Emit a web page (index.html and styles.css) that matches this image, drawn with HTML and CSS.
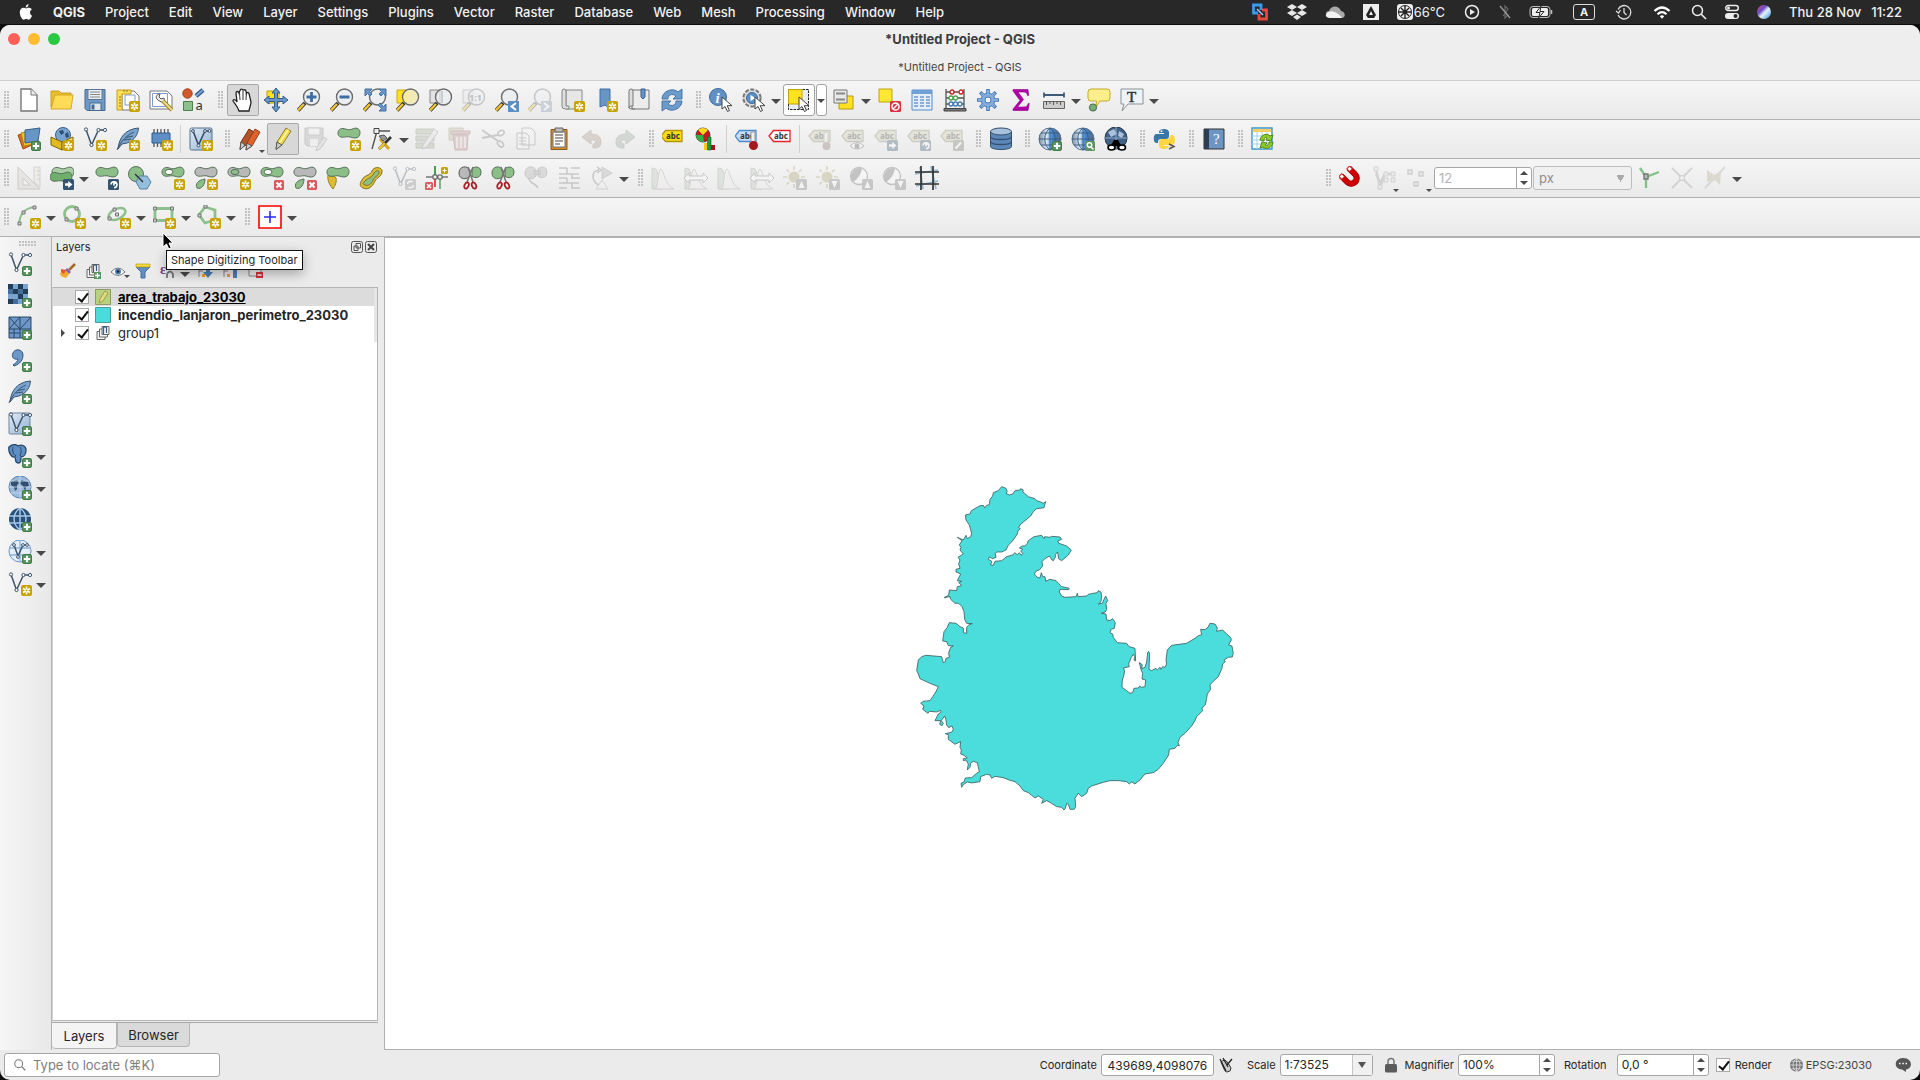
FILE: index.html
```html
<!DOCTYPE html>
<html lang="en">
<head>
<meta charset="utf-8">
<title>*Untitled Project - QGIS</title>
<link rel="stylesheet" href="styles.css">
</head>
<body>
<svg class="paints" aria-hidden="true">
<defs>
<linearGradient id="gBlue" x1="0" y1="0" x2="1" y2="1"><stop offset="0" stop-color="#e4edf7"/><stop offset="1" stop-color="#8fb0d3"/></linearGradient>
<linearGradient id="gGlobe"><stop offset="0" stop-color="#7d8fa3"/><stop offset=".35" stop-color="#dbe9f7"/><stop offset=".6" stop-color="#3f86d2"/><stop offset="1" stop-color="#5b6c80"/></linearGradient>
<linearGradient id="gSiri" x1="0" y1="0" x2="1" y2="1"><stop offset="0" stop-color="#e04a8b"/><stop offset=".35" stop-color="#6a4bc4"/><stop offset=".55" stop-color="#e8f4fb"/><stop offset="1" stop-color="#2b8ed6"/></linearGradient>
</defs>
</svg>
<svg class="sprite" aria-hidden="true">
<defs>
<g id="star"><rect x="13" y="13" width="11" height="11" rx="2" fill="#c8a200"/><path d="M18.500 14.500v8M15 16.500l7 4M22 16.500l-7 4" stroke="#fff" stroke-width="1.700"/><circle cx="18.500" cy="18.500" r="1" fill="#c8a200"/></g>
<g id="plus"><rect x="14.500" y="14.500" width="9" height="9" rx="1.500" fill="#5a9560" stroke="#41794a"/><path d="M19 15.800v6.400M15.800 19h6.400" stroke="#fff" stroke-width="2"/></g>
<g id="cross"><rect x="14" y="14" width="10" height="10" rx="1.500" fill="#d65b5f"/><path d="M16.500 16.500l5 5M21.500 16.500l-5 5" stroke="#fff" stroke-width="2"/></g>
<g id="go"><rect x="13" y="13" width="11" height="11" rx="1.500" fill="#33536f"/><path d="M15 17.300h3.200V15l4.300 3.500-4.300 3.500v-2.300H15z" fill="#fff"/></g>
<g id="spin"><rect x="13" y="13" width="11" height="11" rx="1.500" fill="#33536f"/><path d="M16 18.500a3 3 0 1 1 3 3.200M19 19.500v-2.200h2" fill="none" stroke="#fff" stroke-width="1.600"/></g>
<path id="blob" d="M1 6C1 2 5 .5 8.500 2c3 1.300 5 .8 8-.4C20 .3 23 2 23 5.500S21 11 18 11c-3.500 0-5-1.800-8.500-1.200C5 10.700 1 10.500 1 6z" stroke="#56705a"/>
<g id="lens"><path d="M8 15l-7 7.500" stroke="#333" stroke-width="4"/><path d="M7 16l-6 6.300" stroke="#f2c42c" stroke-width="2.400"/><circle cx="14.500" cy="9" r="8" fill="#e9eef2" fill-opacity=".7" stroke="#6c6c6c" stroke-width="1.400"/></g>
<path id="ptr" d="M11 9v12l3-2.500 2.500 5 2-1-2.300-4.800H21z" fill="#fff" stroke="#444"/>
<g id="veeShape"><path d="M3 2.500l5.500 15.500L15.500 3H22" fill="none" stroke="#3d556b" stroke-width="1.500"/><g fill="#fff" stroke="#3d556b"><circle cx="3" cy="2.500" r="1.600"/><circle cx="8.500" cy="18" r="1.600"/><circle cx="15.500" cy="3" r="1.600"/><circle cx="22" cy="3" r="1.600"/></g></g>
<g id="featherShape"><path d="M2 22C3 10 10 2 22.500 1 22 7 19 13 11 16l-5 1z" fill="#7ba4cf" stroke="#38536e"/><path d="M1 23C5 14 11 8 18 5M8 13l7-1M10 10.500l7-1.500" fill="none" stroke="#38536e"/></g>
<g id="tag"><path d="M1 7l4.500-5.500H22v11H5.500z" stroke-width="1.300"/><text x="6" y="10.300" class="tagtext">abc</text></g>
<g id="pencilShape"><path d="M6 15L15 1l5 3-9 14-6 4z" fill="#f0dc4c" stroke="#8c7b35"/><path d="M8 16.500L17.500 2.500" stroke="#fff39a" stroke-width="1.500"/><path d="M6 15l5 3-6 4.500z" fill="#ccc" stroke="#555"/></g>
<g id="globeShape"><circle cx="12" cy="12" r="11" fill="url(#gGlobe)" stroke="#55708c"/><path d="M1 12h22M3 6h18M3 18h18M12 1v22M12 1C5 6 5 18 12 23M12 1c7 5 7 17 0 22" fill="none" stroke="#38597c" stroke-width=".9"/></g>
<g id="scissorShape"><path d="M10 1l5 15M15 1L9 16" stroke="#777" stroke-width="1.600"/><g fill="none" stroke="#a81e26" stroke-width="1.800"><ellipse cx="8.500" cy="19.500" rx="2" ry="3.200" transform="rotate(25 8.500 19.500)"/><ellipse cx="16" cy="19.500" rx="2" ry="3.200" transform="rotate(-25 16 19.500)"/></g></g>
<g id="histShape"><path d="M1 23V2l4 1 4 9 3 11z" fill="#b8c8b4" stroke="#8c9c88"/><path d="M4 23c3 0 3-20 6-20 3 1 4 17 13 20z" fill="#f2eeee" stroke="#a99"/></g>
<path id="lr" d="M0 12l5-5v3h14V7l5 5-5 5v-3H5v3z" fill="#fff" stroke="#777"/>
<g id="sunShape"><circle cx="11" cy="11" r="5.500" fill="#a89f68"/><path d="M11 0v4M11 18v4M0 11h4M18 11h4M3.500 3.500l2.500 2.500M16 6l2.500-2.500M3.500 18.500L6 16" stroke="#a89f68" stroke-width="1.600"/></g>
<g id="conShape"><circle cx="10" cy="10" r="8.500" fill="#fff" stroke="#666" stroke-width="1.300"/><path d="M4 16A8.500 8.500 0 0 1 13 2.500C12 8 9 13 4 16z" fill="#666"/></g>
<g id="up"><rect x="13" y="13" width="11" height="11" rx="1.500" fill="#777"/><path d="M18.500 15l3 7h-6z" fill="#fff"/></g>
<g id="dn"><rect x="13" y="13" width="11" height="11" rx="1.500" fill="#777"/><path d="M18.500 22l3-7h-6z" fill="#fff"/></g>
<g id="groupShape" fill="#f3f3f3" stroke="#666"><path d="M2 6.500h8v8H2z"/><path d="M4.500 4h8v8h-8z"/><path d="M7 1.500h7v8H7z"/><path d="M8.500 9V2.500q1.500-1.500 3 0V8" fill="none" stroke="#35618c" stroke-width="1.200"/></g>
</defs>

<symbol id="new" viewBox="0 0 24 24"><path d="M4 1h10l6 6v16H4z" fill="#fff" stroke="#777" stroke-width="1.400"/><path d="M14 1v6h6" fill="#eee" stroke="#777"/></symbol>
<symbol id="open" viewBox="0 0 24 24"><path d="M1 3h8l2 2h10v3H6L1 19z" fill="#e9bf2c" stroke="#caa023"/><path d="M5 7h18l-2 14H1z" fill="#ffdc57" stroke="#d3a92b"/></symbol>
<symbol id="save" viewBox="0 0 24 24"><path d="M2 1.500h20v21H4l-2-2z" fill="#6c99c8" stroke="#47698e"/><path d="M5 1.500h14v10H5z" fill="#e9eff4" stroke="#5d7690"/><path d="M7 4h10M7 6.500h10M7 9h10" stroke="#888"/><path d="M7 15h11v7.500H7z" fill="#dfe6ec" stroke="#47698e"/><path d="M8.500 16.500h3v5h-3z" fill="#456a92"/></symbol>
<symbol id="newlayout" viewBox="0 0 24 24"><path d="M6 3h12l5 5v14H6z" fill="#fff" stroke="#777"/><path d="M9 7h10v10H9z" fill="#fff" stroke="#7b9ccd"/><path d="M1 2h14v4H6v16H1z" fill="#fbdf58" stroke="#c49e1a"/><path d="M3 9h2M3 12h2M3 15h2M3 18h2M8 2v2M11 2v2" stroke="#8d7112"/><use href="#star"/></symbol>
<symbol id="layouts" viewBox="0 0 24 24"><path d="M1 3h17l5 5v13H1z" fill="#fff" stroke="#777"/><path d="M3.500 5.500h15v13h-15z" fill="#fff" stroke="#7b9ccd"/><path d="M9 12c-3-2-2-6 2-6l-1 3 2 2 3-1c1 3-1 4-3 4z" fill="#eee" stroke="#555"/><path d="M14 13l9 9" stroke="#a2811d" stroke-width="4"/><path d="M14 13l9 9" stroke="#eddc8b" stroke-width="2"/></symbol>
<symbol id="style" viewBox="0 0 24 24"><circle cx="5.500" cy="5.500" r="4.700" fill="#d1592b" stroke="#9b3c18"/><path d="M21 2l-7 6" stroke="#345c8a" stroke-width="4.500"/><path d="M21 2l-7 6" stroke="#7aa3d0" stroke-width="2"/><path d="M1.500 13.500h9v9h-9z" fill="#8cc08c" stroke="#4f7d50"/><text x="13.500" y="22" class="smalla">a</text></symbol>
<symbol id="hand" viewBox="0 0 24 24"><path d="M8 23c-1-4-4-7-6-10 0-2 2-2 4 1L5 5c0-2 2.500-2 3 0l1-2.500c.5-2 3-2 3 .3 0-1.500 3-1.500 3 .7l.4 2c.6-1.500 2.800-1 2.800 1L20 14c0 4-2 6-2 9z" fill="#fff" stroke="#222" stroke-width="1.300"/><path d="M8.500 5l.5 7M12 3v9M15.300 5.500L15 12" stroke="#333"/></symbol>
<symbol id="pansel" viewBox="0 0 24 24"><path d="M3 3h12v12H3z" fill="#ffe21f" stroke="#b49a17"/><path d="M12 0l4 5h-2.500v5.500H19V8l5 4-5 4v-2.500h-5.500V19H16l-4 5-4-5h2.500v-5.500H5V16l-5-4 5-4v2.500h5.500V5H8z" fill="#6795c5" stroke="#355f8c"/></symbol>
<symbol id="zin" viewBox="0 0 24 24"><use href="#lens"/><path d="M14.500 4v10M9.500 9h10" stroke="#3d6ea5" stroke-width="2.800"/></symbol>
<symbol id="zout" viewBox="0 0 24 24"><use href="#lens"/><path d="M9.500 9h10" stroke="#3d6ea5" stroke-width="2.800"/></symbol>
<symbol id="zfull" viewBox="0 0 24 24"><use href="#lens"/><path d="M2 1h7L6.500 3.500 9 6 7 8 4.500 5.500 2 8zM23 1v7l-2.500-2.500L18 8l-2-2 2.500-2.500L16 1zM23 23h-7l2.500-2.500L15 17l2-2 3.500 3.500L23 16z" fill="#6795c5" stroke="#456f9c"/></symbol>
<symbol id="zsel" viewBox="0 0 24 24"><path d="M1 2h10v13H1z" fill="#ffe21f" stroke="#c9aa15"/><use href="#lens"/><circle cx="14.500" cy="9" r="7" fill="#f6eb9c" fill-opacity=".75"/></symbol>
<symbol id="zlay" viewBox="0 0 24 24"><path d="M1 2h10v13H1z" fill="#e3e3e3" stroke="#888"/><use href="#lens"/><path d="M13 3v12" stroke="#aaa"/></symbol>
<symbol id="znat" viewBox="0 0 24 24"><path d="M1 2h10v13H1z" fill="#e3e3e3" stroke="#888"/><use href="#lens"/><text x="7" y="12.500" class="one">1:1</text></symbol>
<symbol id="zlast" viewBox="0 0 24 24"><use href="#lens"/><rect x="13" y="13" width="11" height="11" fill="#5d8fc2"/><path d="M21 15l-4.500 3.500L21 22" fill="none" stroke="#fff" stroke-width="2"/></symbol>
<symbol id="znext" viewBox="0 0 24 24"><use href="#lens"/><rect x="13" y="13" width="11" height="11" fill="#7f96ad"/><path d="M16 15l4.500 3.500L16 22" fill="none" stroke="#fff" stroke-width="2"/></symbol>
<symbol id="mapview" viewBox="0 0 24 24"><path d="M5 2h16v19H5z" fill="#e7e7e7" stroke="#888"/><path d="M1 3q0-2 2-2t2 2v15h3v3H4q-3 0-3-3z" fill="#ddd" stroke="#888"/><use href="#star"/></symbol>
<symbol id="bmnew" viewBox="0 0 24 24"><path d="M6 1h10v20l-5-4-5 2z" fill="#6795c5" stroke="#456f9c"/><use href="#star"/></symbol>
<symbol id="bm" viewBox="0 0 24 24"><path d="M5 2h17v19H5z" fill="#ececec" stroke="#777"/><path d="M2 3q0-2 2-2t2 2v15H4q-2 0-2 2z" fill="#ddd" stroke="#777"/><path d="M2 19q0 2 2 2h4" fill="none" stroke="#777"/><path d="M14 1h4v8l-2 2-2-2z" fill="#6795c5" stroke="#355f8c"/></symbol>
<symbol id="refresh" viewBox="0 0 24 24"><path d="M2 11C2 3 13-1 18 4l4-3v10h-9l3-3c-4-3-8-1-8 3z" fill="#6c9acb" stroke="#4877a9"/><path d="M22 13c0 8-11 12-16 7l-4 3V13h9l-3 3c4 3 8 1 8-3z" fill="#6c9acb" stroke="#4877a9"/></symbol>
<symbol id="info" viewBox="0 0 24 24"><circle cx="9" cy="9" r="8.500" fill="#6190c4" stroke="#3c6ca1"/><text x="6.500" y="15" class="ital">i</text><use href="#ptr" x="2"/></symbol>
<symbol id="action" viewBox="0 0 24 24"><circle cx="10" cy="10" r="8.600" fill="#ddd" stroke="#777" stroke-width="2" stroke-dasharray="4 1.500"/><circle cx="10" cy="10" r="5.500" fill="#5d90c5" stroke="#3c6ca1"/><path d="M8.500 7l5 3-5 3z" fill="#fff"/><use href="#ptr" x="2"/></symbol>
<symbol id="select" viewBox="0 0 24 24"><path d="M1.500 1.500h20v20h-20z" fill="#e9edf1" stroke="#222" stroke-dasharray="2.500 1"/><path d="M1.500 1.500H15V16H1.500z" fill="#ffe21f" stroke="#c1a312"/><use href="#ptr" x="1"/></symbol>
<symbol id="selform" viewBox="0 0 24 24"><path d="M7 8h14v13H7z" fill="#ffe21f" stroke="#b49a17"/><path d="M2 2h13v13H2z" fill="#e8e8e8" stroke="#777"/><path d="M4 5.500h9M4 11.500h9" stroke="#888" stroke-width="2"/></symbol>
<symbol id="desel" viewBox="0 0 24 24"><path d="M2 1h13v13H2z" fill="#ffe732" stroke="#c1a312"/><rect x="13" y="13" width="11" height="11" rx="1.500" fill="#d8333a"/><circle cx="18.500" cy="18.500" r="3.600" fill="none" stroke="#fff" stroke-width="1.500"/><path d="M16 21l5-5" stroke="#fff" stroke-width="1.500"/></symbol>
<symbol id="table" viewBox="0 0 24 24"><path d="M2 2h20v20H2z" fill="#e4eefa" stroke="#568bc4"/><path d="M2 2h20v4H2z" fill="#6fa0d6"/><path d="M4 9h4M10 9h4M16 9h4M4 12h4M10 12h4M16 12h4M4 15h4M10 15h4M16 15h4M4 18h4M10 18h4M16 18h4" stroke="#6d9bd0" stroke-width="1.400"/></symbol>
<symbol id="abacus" viewBox="0 0 24 24"><path d="M3 1v20M21 1v20M3 4h18M3 10h18M3 16h18" stroke="#555" stroke-width="1.300"/><path d="M1 20.500h22v2.500H1z" fill="#777" stroke="#444"/><g fill="#fff" stroke-width="1.300"><g stroke="#cc2027"><circle cx="9" cy="4" r="2"/><circle cx="18" cy="4" r="2"/></g><g stroke="#4ca350"><circle cx="8" cy="10" r="2"/><circle cx="12.500" cy="10" r="2"/></g><g stroke="#407ab7"><circle cx="8" cy="16" r="2"/><circle cx="12.500" cy="16" r="2"/><circle cx="17" cy="16" r="2"/></g></g></symbol>
<symbol id="gear" viewBox="0 0 24 24"><path d="M12 1v22M1 12h22M4.200 4.200l15.600 15.600M19.800 4.200L4.200 19.800" stroke="#487bb4" stroke-width="3.600"/><circle cx="12" cy="12" r="7" fill="#82abd9" stroke="#487bb4"/><path d="M12 2v20M2 12h20M5 5l14 14M19 5L5 19" stroke="#82abd9" stroke-width="2"/><circle cx="12" cy="12" r="3" fill="#f0f3f6" stroke="#487bb4"/></symbol>
<symbol id="sigma" viewBox="0 0 24 24"><path d="M4 1.500h15l.7 6H18.500C18 5 17 4 14.500 4H9l5.500 7.500L8.500 19H15c2.500 0 3.500-1 4.200-3.500h1.100L19 22.500H4v-1.500l7-8.500L4 3z" fill="#b000a8" stroke="#8b0086" stroke-width=".6"/></symbol>
<symbol id="measure" viewBox="0 0 24 24"><path d="M2 7h20M2 4.500v5M22 4.500v5" stroke="#3d5b78" stroke-width="1.800"/><path d="M1.500 13.500h21v7h-21z" fill="#ccc" stroke="#666"/><path d="M4.500 13v4M8 13v3M11.500 13v4M15 13v3M18.500 13v4" stroke="#555"/></symbol>
<symbol id="tip" viewBox="0 0 24 24"><path d="M4 1h16q3 0 3 3v6q0 3-3 3h-7l-4 6 .500-6H4q-3 0-3-3V4q0-3 3-3z" fill="#fbee8b" stroke="#c7a92b"/><circle cx="6" cy="19.500" r="3.600" fill="#78ad73" stroke="#47694a"/></symbol>
<symbol id="textann" viewBox="0 0 24 24"><path d="M1 1h22v15H8l-6 7 2-7H1z" fill="#edf4f7" stroke="#8a9296"/><text x="7" y="14" class="bigt">T</text></symbol>

<symbol id="dsm" viewBox="0 0 24 24"><path d="M1 8l10-2 4 12-9 4z" fill="#d96d20" stroke="#a3490e"/><path d="M4 6l11-2 2 13-10 2z" fill="#f2c32f" stroke="#b1850d"/><path d="M8 3l15-2-2 13-13 2z" fill="#6795c5" stroke="#375f8c"/><use href="#plus"/></symbol>
<symbol id="gpkg" viewBox="0 0 24 24"><circle cx="13" cy="8" r="7.500" fill="#7ba3cf" stroke="#3c5f85"/><path d="M9 4l4-1 1 3-3 2zM15 7l3-2 1 5-3 1z" fill="#2e4f75"/><path d="M1 10l11 5v8L1 18z" fill="#e0ba1f" stroke="#7c6511"/><path d="M12 15l11-5v8l-11 5z" fill="#ffe24a" stroke="#7c6511"/><use href="#star"/></symbol>
<symbol id="vnew" viewBox="0 0 24 24"><use href="#veeShape"/><use href="#star"/></symbol>
<symbol id="feather" viewBox="0 0 24 24"><use href="#featherShape"/><use href="#star"/></symbol>
<symbol id="chip" viewBox="0 0 24 24"><path d="M5 2v18M8.500 2v18M12 2v18M15.500 2v18M19 2v18" stroke="#555" stroke-width="1.300"/><path d="M3 6h18v10H3z" fill="#5d8fc5" stroke="#2f5b8c"/><use href="#star"/></symbol>
<symbol id="vbox" viewBox="0 0 24 24"><rect x="1" y="1" width="22" height="22" rx="1.500" fill="url(#gBlue)" stroke="#53718f"/><path d="M4 4l5.500 14L16 4h4" fill="none" stroke="#334b63" stroke-width="1.600"/><g fill="#fff" stroke="#334b63"><circle cx="4" cy="4" r="1.400"/><circle cx="9.500" cy="18.500" r="1.400"/><circle cx="16" cy="4" r="1.400"/><circle cx="20.500" cy="4" r="1.400"/></g><use href="#star"/></symbol>
<symbol id="pencils" viewBox="0 0 24 24"><path d="M3 15L11 2l5 3-8 13-6 4z" fill="#b5522a" stroke="#733017"/><path d="M9 16l8-14 5 3-8 14-6 4z" fill="#e0622b" stroke="#92401b"/><path d="M3 15l4 3-5 5zM9 16l5 3-6 4z" fill="#ccc" stroke="#555"/></symbol>
<symbol id="pencil" viewBox="0 0 24 24"><use href="#pencilShape"/></symbol>
<symbol id="saveedit" viewBox="0 0 24 24"><path d="M1 1h18v18H3l-2-2z" fill="#aaa" stroke="#777"/><path d="M4 1h12v7H4z" fill="#eee" stroke="#888"/><path d="M6 12h8v7H6z" fill="#eee"/><path d="M13 20l7-10 3 2-7 10-4 2z" fill="#ccc" stroke="#888"/></symbol>
<symbol id="addpoly" viewBox="0 0 24 24"><use href="#blob" fill="#8cbf88"/><use href="#star"/></symbol>
<symbol id="vertex" viewBox="0 0 24 24"><path d="M2 22L7 4M8 4h12" stroke="#555" stroke-width="1.400"/><path d="M4 1.500h5v5H4z" fill="#eee" stroke="#444"/><path d="M10 12l9 10" stroke="#d6a51e" stroke-width="3"/><path d="M21 10L9 22" stroke="#333" stroke-width="2.600"/><path d="M9 22l6-6" stroke="#f4c733" stroke-width="2.400"/><path d="M9 9l5-1 3 3-4 3z" fill="#999" stroke="#555"/></symbol>
<symbol id="modattr" viewBox="0 0 24 24"><path d="M1 2h18v5H1zM1 9h18v5H1zM1 16h18v5H1z" fill="#a5b093" stroke="#7c8570"/><path d="M8 18L19 2l4 3-11 15-5 2z" fill="#ddd" stroke="#888"/></symbol>
<symbol id="trash" viewBox="0 0 24 24"><path d="M1 1h14v12H1z" fill="#b9bb94" stroke="#8b8b70"/><path d="M5 8h15l-1 15H7zM3 4h19v3H3z" fill="#c59090" stroke="#8b5a5a"/><path d="M9 10v11M13 10v11M17 10v11" stroke="#efefef" stroke-width="1.500"/></symbol>
<symbol id="cut" viewBox="0 0 24 24"><path d="M1 3l16 11M1 11l16-3" stroke="#777" stroke-width="1.800"/><ellipse cx="20" cy="6" rx="3.300" ry="2.300" transform="rotate(-30 20 6)" fill="none" stroke="#777" stroke-width="1.600"/><ellipse cx="19.500" cy="17" rx="3.500" ry="2.300" transform="rotate(45 19.500 17)" fill="none" stroke="#777" stroke-width="1.600"/></symbol>
<symbol id="copy" viewBox="0 0 24 24"><path d="M8 1h9l4 4v13H8zM3 6h9l3 3v13H3z" fill="#f6f6f6" stroke="#777"/><path d="M5 11h7M5 14h7M5 17h7" stroke="#777"/></symbol>
<symbol id="paste" viewBox="0 0 24 24"><path d="M4 2.500h16v20H4z" fill="#cf8d33" stroke="#8c5a18"/><path d="M6 5h12v15H6z" fill="#fff" stroke="#777"/><path d="M8 1h8v4H8z" fill="#bbb" stroke="#666"/><path d="M8 8h8M8 11h8M8 14h8M8 17h5" stroke="#444"/></symbol>
<symbol id="undo" viewBox="0 0 24 24"><path d="M2 10l9-7v4c7 0 10 3 10 8s-3 6-8 6v-4c4 0 4-5-2-4v4z" fill="#ab9382" stroke="#8f7a6b"/></symbol>
<symbol id="redo" viewBox="0 0 24 24"><path d="M22 10l-9-7v4c-7 0-10 3-10 8s3 6 8 6v-4c-4 0-4-5 2-4v4z" fill="#95a59b" stroke="#7c8c82"/></symbol>
<symbol id="abc" viewBox="0 0 24 24"><g fill="#f8dc1a" stroke="#b39310"><use href="#tag" x="-2" y="2"/></g></symbol>
<symbol id="diagram" viewBox="0 0 24 24"><circle cx="8" cy="8" r="7" fill="#c5171e" stroke="#222" stroke-width=".7"/><path d="M8 8L1 8a7 7 0 0 0 8 7z" fill="#2bb246"/><path d="M8 8L3 3a7 7 0 0 1 10 0z" fill="#f8dc1a"/><path d="M9 16h3.500v7H9z" fill="#f8c91a"/><path d="M12.500 10h3.500v13h-3.500z" fill="#1f9a3d" stroke="#0e6424" stroke-width=".6"/><path d="M16 18h4v5h-4z" fill="#a5161c"/></symbol>
<symbol id="abpin" viewBox="0 0 24 24"><g fill="#c5def7" stroke="#4b8bd0"><use href="#tag" x="-1" y="2"/></g><path d="M16 5h4v10h-4z" fill="#eee" stroke="#999"/><circle cx="18.500" cy="18.500" r="4.500" fill="#a3191e"/></symbol>
<symbol id="abcred" viewBox="0 0 24 24"><g fill="#fff" stroke="#e5232c" class="redtag"><use href="#tag" x="0" y="2"/></g></symbol>
<symbol id="abpin2" viewBox="0 0 24 24"><g fill="#c9c9a8" stroke="#88886c"><use href="#tag" y="2"/></g><path d="M16 5h4v12h-4z" fill="#eee" stroke="#888"/><circle cx="18.500" cy="19" r="4" fill="#8b6c6c"/></symbol>
<symbol id="abeye" viewBox="0 0 24 24"><g fill="#c9c9a8" stroke="#88886c"><use href="#tag" y="2"/></g><path d="M9 19q7-7 14 0-7 6-14 0z" fill="#fff" stroke="#555"/><circle cx="16" cy="19" r="2.500" fill="#555"/></symbol>
<symbol id="abgo" viewBox="0 0 24 24"><g fill="#c9c9a8" stroke="#88886c"><use href="#tag" y="2"/></g><use href="#go"/></symbol>
<symbol id="abrot" viewBox="0 0 24 24"><g fill="#c9c9a8" stroke="#88886c"><use href="#tag" y="2"/></g><use href="#spin"/></symbol>
<symbol id="abedit" viewBox="0 0 24 24"><g fill="#c9c9a8" stroke="#88886c"><use href="#tag" y="2"/></g><rect x="13" y="13" width="11" height="11" rx="1.500" fill="#77776a"/><path d="M15.500 21.500l5.500-6" stroke="#fff" stroke-width="2"/></symbol>
<symbol id="db" viewBox="0 0 24 24"><path d="M1.500 4.500v15c0 4 21 4 21 0v-15z" fill="#5c87b8" stroke="#34506f"/><ellipse cx="12" cy="4.500" rx="10.500" ry="3.500" fill="#a9c1db" stroke="#34506f"/><path d="M1.500 9.500c0 4 21 4 21 0M1.500 14.500c0 4 21 4 21 0" fill="none" stroke="#34506f" stroke-width="1.300"/></symbol>
<symbol id="globeadd" viewBox="0 0 24 24"><use href="#globeShape"/><use href="#plus"/></symbol>
<symbol id="globefind" viewBox="0 0 24 24"><use href="#globeShape"/><rect x="14" y="14" width="10" height="10" rx="1.500" fill="#5a9560"/><circle cx="18.500" cy="18" r="2.200" fill="none" stroke="#fff" stroke-width="1.500"/><path d="M20 20l2.500 2.500" stroke="#fff" stroke-width="1.500"/></symbol>
<symbol id="globebin" viewBox="0 0 24 24"><circle cx="12" cy="11" r="11" fill="#416186" stroke="#24384d"/><path d="M4 5l6-3 3 5-6 3zM15 4l5 3-2 4-4-2z" fill="#a9c3dd"/><path d="M1 11h22M12 0v22" stroke="#8fabc8"/><path d="M6 20l4-7h4l4 7v3h-4l-1-4h-2l-1 4H6z" fill="#000"/><ellipse cx="7.500" cy="20.500" rx="3.500" ry="2.500" fill="#fff" stroke="#000" stroke-width="1.600"/><ellipse cx="18" cy="20.500" rx="3.500" ry="2.500" fill="#fff" stroke="#000" stroke-width="1.600"/></symbol>
<symbol id="python" viewBox="0 0 24 24"><path d="M6 5c0-4 10-4 10 0v4q0 3-3 3H8q-3 0-3 3v1H3C0 16 0 7 3 7h8V6H6z" fill="#3a75a8"/><path d="M18 8h1c4 0 4 10 0 10h-8v1h5c0 4-10 4-10 0v-4q0-3 3-3h5q3 0 3-3z" fill="#ffd640"/><circle cx="8.500" cy="4.200" r="1" fill="#fff"/><path d="M16 17l5 2.500-5 2.500" fill="none" stroke="#555" stroke-width="1.500"/></symbol>
<symbol id="help" viewBox="0 0 24 24"><path d="M2 2h20v20H2z" fill="#6c95c4" stroke="#333"/><path d="M2 2h5v20H2z" fill="#2d3c50"/><text x="11" y="17" class="q">?</text></symbol>
<symbol id="sheet" viewBox="0 0 24 24"><path d="M1 1h20v21H1z" fill="#fff" stroke="#3f95c6" stroke-width="1.400"/><path d="M2 2h18v3H2z" fill="#f5cf63"/><path d="M1 9h20M1 13h20M1 17h20M6 5v17M11 5v17M16 5v17" stroke="#a5cfe8"/><path d="M9 13c1-6 8-7 10-4l3-1-2 6-5-1 1-2c-2-1-3 0-3 3zM22 15c0 6-8 8-10 5l-3 1 2-6 5 1-2 2c2 1 4 0 4-3z" fill="#8fca2c" stroke="#4e8a14"/></symbol>

<symbol id="tri" viewBox="0 0 24 24"><path d="M1 1v22h22zM6 12v7h7z" fill="#d5cfc9" stroke="#8a8580" fill-rule="evenodd"/><path d="M17 1h6v20L17 16z" fill="#e8e3d6" stroke="#999"/><path d="M20 5h3M20 9h3M20 13h3" stroke="#888"/></symbol>
<symbol id="move" viewBox="0 0 24 24"><use href="#blob" fill="#a9cda5" x="1"/><use href="#blob" fill="#6fae6c" x="-1" y="5"/><use href="#go"/></symbol>
<symbol id="rot" viewBox="0 0 24 24"><use href="#blob" fill="#8cbf88"/><use href="#spin"/></symbol>
<symbol id="scale" viewBox="0 0 24 24"><circle cx="8" cy="8" r="7.500" fill="#8cbf88" stroke="#56705a"/><path d="M11 10h8l4 6-4 7h-7l-4-7z" fill="#94bfdc" stroke="#5682a5"/><path d="M7 8l8 8" stroke="#333" stroke-width="1.400"/></symbol>
<symbol id="ring" viewBox="0 0 24 24"><use href="#blob" fill="#8cbf88"/><ellipse cx="8" cy="6" rx="4" ry="2.600" fill="#fff" stroke="#56705a"/><use href="#star"/></symbol>
<symbol id="part" viewBox="0 0 24 24"><use href="#blob" fill="#b9b9b9"/><path d="M3 22c-2-4 1-8 8-9 0 5-3 11-8 9z" fill="#8cbf88" stroke="#56705a"/><use href="#star"/></symbol>
<symbol id="fill" viewBox="0 0 24 24"><use href="#blob" fill="#b9b9b9"/><ellipse cx="8" cy="6" rx="4" ry="2.600" fill="#8cbf88" stroke="#56705a"/><use href="#star"/></symbol>
<symbol id="delring" viewBox="0 0 24 24"><use href="#blob" fill="#8cbf88"/><ellipse cx="8" cy="6" rx="4" ry="2.600" fill="#fff" stroke="#56705a"/><use href="#cross"/></symbol>
<symbol id="delpart" viewBox="0 0 24 24"><use href="#blob" fill="#b9b9b9"/><path d="M3 22c-2-4 1-8 8-9 0 5-3 11-8 9z" fill="#8cbf88" stroke="#56705a"/><use href="#cross"/></symbol>
<symbol id="reshape" viewBox="0 0 24 24"><path d="M2 9c3 3 5-1 8 3 1 4-1 8-3 11-3-3-6-9-5-14z" fill="#dfbb32" stroke="#94802a"/><use href="#blob" fill="#8cbf88"/></symbol>
<symbol id="offset" viewBox="0 0 24 24"><path d="M3 14c2-5 8-4 10-9s10-4 10 0c0 6-5 6-7 10-3 7-8 9-12 7-4-2-3-5-1-8z" fill="#e0bc33" stroke="#7d6c20"/><path d="M6 15c3-3 7-3 9-8 2-3 5-3 5-1 0 4-4 4-6 8-2 5-5 6-8 5-3-1-2-2 0-4z" fill="#8cbf88" stroke="#75722c"/></symbol>
<symbol id="trimv" viewBox="0 0 24 24"><use href="#veeShape"/><rect x="13" y="13" width="11" height="11" rx="1.500" fill="#888"/><path d="M15.500 18a3 3 0 0 1 5-2M21.500 19a3 3 0 0 1-5 2" fill="none" stroke="#fff" stroke-width="1.600"/></symbol>
<symbol id="merge" viewBox="0 0 24 24"><path d="M10 0v11" stroke="#4d9a52" stroke-width="2"/><path d="M15 11v12" stroke="#7db67f" stroke-width="2"/><path d="M1 11h22" stroke="#777" stroke-width="1.600"/><path d="M10 13v8" stroke="#e05050" stroke-width="2"/><path d="M8 9h4v4H8zM13 9h4v4h-4z" fill="#eee" stroke="#555"/><rect x="16" y="1" width="7" height="7" rx="1.500" fill="#c8a200"/><path d="M19.500 2.500v4M17.500 4.500h4" stroke="#fff"/><rect x="0" y="16" width="8" height="8" rx="1.500" fill="#d65b5f"/><path d="M2 18l4 4M6 18l-4 4" stroke="#fff" stroke-width="1.500"/></symbol>
<symbol id="split1" viewBox="0 0 24 24"><path d="M12 10c-3 4-11 4-11-3S9-1 12 4z" fill="#b9b9b9" stroke="#555"/><path d="M14 10c3 3 9 2 9-4S16 0 14 3z" fill="#8cbf88" stroke="#56705a"/><use href="#scissorShape"/></symbol>
<symbol id="split2" viewBox="0 0 24 24"><path d="M12 10c-3 4-11 4-11-3S9-1 12 4z" fill="#8cbf88" stroke="#56705a"/><path d="M14 10c3 3 9 2 9-4S16 0 14 3z" fill="#8cbf88" stroke="#56705a"/><use href="#scissorShape"/></symbol>
<symbol id="stitch" viewBox="0 0 24 24"><path d="M12 10c-3 4-11 4-11-3S9-1 12 4z" fill="#aaa" stroke="#777"/><path d="M14 10c3 3 9 2 9-4S16 0 14 3z" fill="#aaa" stroke="#777"/><path d="M9 5h8M9 8h8M5 12c0 6 6 4 9 10" fill="none" stroke="#777" stroke-width="1.500"/></symbol>
<symbol id="lines" viewBox="0 0 24 24"><path d="M2 2h8M14 2h9M2 8h20M2 12h8M14 12h9M2 17h20M2 22h8M14 22h9M10 2v6M15 8v5M10 12v5M15 17v5" stroke="#777" stroke-width="1.500"/></symbol>
<symbol id="rotsym" viewBox="0 0 24 24"><path d="M9 19C1 15 1 5 9 4M7 1l4 3-4 3" fill="none" stroke="#777" stroke-width="1.500"/><path d="M12 1l10 6-10 6z" fill="#aaa" stroke="#888"/><path d="M12 14l6 9H6z" fill="#eee" stroke="#999"/></symbol>
<symbol id="hist" viewBox="0 0 24 24"><use href="#histShape"/></symbol>
<symbol id="histlr" viewBox="0 0 24 24"><use href="#histShape"/><use href="#lr"/></symbol>
<symbol id="sunup" viewBox="0 0 24 24"><use href="#sunShape"/><use href="#up"/></symbol>
<symbol id="sundn" viewBox="0 0 24 24"><use href="#sunShape"/><use href="#dn"/></symbol>
<symbol id="conup" viewBox="0 0 24 24"><use href="#conShape"/><use href="#up"/></symbol>
<symbol id="condn" viewBox="0 0 24 24"><use href="#conShape"/><use href="#dn"/></symbol>
<symbol id="hash" viewBox="0 0 24 24"><path d="M5 1l3 22M16 0l5 23M0 8l23-4M1 20l22-5" stroke="#8db4cf" stroke-width="1.600"/><path d="M6 0v24M18 0v24M0 6h24M0 18h24" stroke="#333" stroke-width="1.700"/></symbol>
<symbol id="magnet" viewBox="0 0 24 24"><g transform="rotate(-45 12 12)"><path d="M4 4v8c0 11 16 11 16 0V4h-5v8c0 4-6 4-6 0V4z" fill="#d40000" stroke="#a00000"/><path d="M4.500 2.500h4v4h-4zM15.500 2.500h4v4h-4z" fill="#fff" stroke="#c22"/></g></symbol>
<symbol id="snapall" viewBox="0 0 24 24"><path d="M4 3l4 18 4-9M4 8l4 9 5-9h8" fill="none" stroke="#999" stroke-width="2.500"/><path d="M2 1h4v4H2zM12 6h4v4h-4zM19 6h4v4h-4zM12 12h4v4h-4zM19 12h4v4h-4zM6 19h4v4H6z" fill="#ddd" stroke="#999"/></symbol>
<symbol id="dots" viewBox="0 0 24 24"><path d="M3 4h4v4H3zM14 6h4v4h-4zM9 16h4v4H9z" fill="#ddd" stroke="#888" stroke-width="1.400"/></symbol>
<symbol id="topo" viewBox="0 0 24 24"><path d="M3 2l6 9 13-5M9 11v11" fill="none" stroke="#84c08a" stroke-width="2.400"/><path d="M7 8h4v5H7z" fill="#bbb" stroke="#777" stroke-width="1.400"/></symbol>
<symbol id="inter" viewBox="0 0 24 24"><path d="M2 2l20 20M22 2L2 22" stroke="#999" stroke-width="2"/><circle cx="12" cy="12" r="2.500" fill="#eee" stroke="#888"/></symbol>
<symbol id="trace" viewBox="0 0 24 24"><path d="M2 22L22 1" stroke="#aaa" stroke-width="2"/><path d="M4 4l7 5 7-4-1 14-5-5-8 2z" fill="#b4ab88"/></symbol>

<symbol id="arc" viewBox="0 0 24 24"><path d="M2 19C3 8 8 3 18 2" fill="none" stroke="#8cc08c" stroke-width="2"/><path d="M1 17h3v3H1zM5 6h3v3H5zM16 1h3v3h-3z" fill="#ccc" stroke="#777"/><use href="#star"/></symbol>
<symbol id="circ" viewBox="0 0 24 24"><circle cx="10" cy="9" r="7.500" fill="none" stroke="#8cc08c" stroke-width="2.800"/><path d="M13 2h3v3h-3zM3 13h3v3H3z" fill="#ccc" stroke="#777"/><use href="#star"/></symbol>
<symbol id="elli" viewBox="0 0 24 24"><ellipse cx="10" cy="9" rx="9" ry="5" transform="rotate(-25 10 9)" fill="none" stroke="#8cc08c" stroke-width="2.500"/><path d="M8.500 8h3v3h-3zM6 3h3v3H6zM1 12h3v3H1z" fill="#ccc" stroke="#777"/><use href="#star"/></symbol>
<symbol id="rect" viewBox="0 0 24 24"><path d="M3 3.500h17v12H3z" fill="none" stroke="#8cc08c" stroke-width="2.800"/><path d="M1.500 2h3v3h-3zM18.500 2h3v3h-3zM1.500 14h3v3h-3z" fill="#ccc" stroke="#777"/><use href="#star"/></symbol>
<symbol id="penta" viewBox="0 0 24 24"><path d="M8 2l10 3v10l-10 3-6-8z" fill="none" stroke="#8cc08c" stroke-width="2.800"/><path d="M7 0h3v3H7zM1 9h3v3H1z" fill="#ccc" stroke="#777"/><use href="#star"/></symbol>
<symbol id="cad" viewBox="0 0 24 24"><path d="M1 1h22v22H1z" fill="#fff" stroke="#f00" stroke-width="1.600"/><path d="M12 6v12M6 12h12" stroke="#2a2af0" stroke-width="1.600"/></symbol>

<symbol id="vadd" viewBox="0 0 24 24"><use href="#veeShape"/><use href="#plus"/></symbol>
<symbol id="raster" viewBox="0 0 24 24"><path d="M0 0h20v20H0z" fill="#7ba3cf"/><path d="M0 0h5v5H0zM10 0h5v5h-5zM5 5h5v5H5zM15 5h5v5h-5zM0 15h5v5H0zM10 10h5v5h-5z" fill="#233c58"/><path d="M0 5h5v5H0zM10 5h5v5h-5zM5 15h5v5H5z" fill="#456d99"/><use href="#plus"/></symbol>
<symbol id="meshi" viewBox="0 0 24 24"><path d="M1 1h22v21H1z" fill="#6c97c7" stroke="#2b4865"/><path d="M1 13h22M12 1v21M1 1l11 12M12 1L1 13M23 1L12 13M6 13v9M1 17h11" stroke="#2b4865"/><use href="#plus"/></symbol>
<symbol id="comma" viewBox="0 0 24 24"><path d="M5 5c2-5 10-4 10 2 0 5-3 9-9 11l-1-1c3-2 5-4 5-6-4 1-7-2-5-6z" fill="#6c97c7" stroke="#35587e"/><use href="#plus"/></symbol>
<symbol id="fadd" viewBox="0 0 24 24"><use href="#featherShape"/><use href="#plus"/></symbol>
<symbol id="vboxadd" viewBox="0 0 24 24"><rect x="1" y="1" width="21" height="21" rx="1" fill="url(#gBlue)" stroke="#71869b"/><use href="#veeShape"/><use href="#plus"/></symbol>
<symbol id="elephant" viewBox="0 0 24 24"><path d="M1 3c3-3 7-3 9-1 4-2 8 0 8 4s-2 7-5 7c0 4 0 6-3 6s-2-3-3-6c-4 1-7-6-6-10z" fill="#5f8fc2" stroke="#27476a" stroke-width="1.300"/><path d="M5 3c-1 4 0 7 3 9M12 3c2 3 1 6 0 9" fill="none" stroke="#27476a"/><use href="#plus"/></symbol>
<symbol id="wms" viewBox="0 0 24 24"><circle cx="12" cy="11" r="11" fill="#9ab9da" stroke="#5b86b2"/><path d="M3 6l6-2 2 3-2 2v4l-2 2-1-4-3-2zM13 4l7 2 1 4-3 1-1 4-2-5-3-2z" fill="#324f70"/><path d="M1 11h22M12 0v22M3 5h18M3 17h18" stroke="#c9d9ea" stroke-width=".8"/><use href="#plus"/></symbol>
<symbol id="wcs" viewBox="0 0 24 24"><circle cx="12" cy="11" r="11" fill="#29507a"/><path d="M1 8h22M1 15h22M12 0v22M12 0C4 6 4 16 12 22M12 0c8 6 8 16 0 22" fill="none" stroke="#a5c6e8" stroke-width="1.500"/><use href="#plus"/></symbol>
<symbol id="wfs" viewBox="0 0 24 24"><circle cx="12" cy="11" r="11" fill="#e6eff9" stroke="#6c97c7"/><path d="M1 8h22M1 15h22M12 0v22" fill="none" stroke="#8bb1da" stroke-width="1.300"/><path d="M6 5l4 11 5-11h4" fill="none" stroke="#3d556b" stroke-width="1.500"/><g fill="#fff" stroke="#3d556b"><circle cx="6" cy="5" r="1.400"/><circle cx="10" cy="17" r="1.400"/><circle cx="15" cy="5" r="1.400"/><circle cx="19" cy="5" r="1.400"/></g><use href="#plus"/></symbol>

<symbol id="brush" viewBox="0 0 16 16"><path d="M15 1L9 7" stroke="#a56a24" stroke-width="2.500"/><path d="M7 5l4 4-2 2-4-4z" fill="#8a5fae"/><path d="M5 7l4 4-3 4-5-2-1-3z" fill="#f1a92c"/><path d="M1 6l5 1-2 4-3-2z" fill="#e8562c"/></symbol>
<symbol id="gadd" viewBox="0 0 16 16"><use href="#groupShape"/><path d="M9 9h7v7H9z" fill="#5a9560"/><path d="M12.500 10v5M10 12.500h5" stroke="#fff" stroke-width="1.300"/></symbol>
<symbol id="group" viewBox="0 0 16 16"><use href="#groupShape"/></symbol>
<symbol id="eye" viewBox="0 0 16 16"><path d="M1 9q7-8 14 0-7 7-14 0z" fill="#fff" stroke="#777"/><circle cx="8" cy="8.500" r="3" fill="#4b7db5"/><circle cx="8" cy="8.500" r="1.200" fill="#222"/></symbol>
<symbol id="funnel" viewBox="0 0 16 16"><path d="M1 4h14L10 9v6H6V9z" fill="#5f90c4" stroke="#466f9d"/><path d="M1 1h14v3H1z" fill="#f8dc3a" stroke="#b79b1c" stroke-width=".7"/></symbol>
<symbol id="expr" viewBox="0 0 16 16"><text x="0" y="11" class="eps">ε</text><path d="M7 14v-3q3-5 6 0v3M7 12v3M13 12v3" fill="none" stroke="#777" stroke-width="1.800"/></symbol>
<symbol id="expand" viewBox="0 0 16 16"><path d="M2 2v12M2 8h4" stroke="#888"/><path d="M5 4h3v3H5zM5 11h3v3H5z" fill="#ee9a2f"/><path d="M9 3h4v6h3l-5 6-5-6h3z" fill="#4f7fb8"/></symbol>
<symbol id="collapse" viewBox="0 0 16 16"><path d="M2 2v12M2 8h4" stroke="#888"/><path d="M5 4h3v3H5zM5 11h3v3H5z" fill="#ee9a2f"/><path d="M11 2h4v13h-4z" fill="#4f7fb8"/></symbol>
<symbol id="remove" viewBox="0 0 16 16"><path d="M2 1h12v12H2z" fill="#f1f1f1" stroke="#888"/><path d="M9 9h7v6H9z" fill="#d8343c"/><path d="M10.500 12h4" stroke="#fff" stroke-width="1.500"/></symbol>
</svg>

<nav class="menubar">
  <svg class="apple" viewBox="0 0 14 16"><path d="M9.500 0C9.700 1.800 8.300 3.500 6.800 3.500 6.500 1.800 8 .2 9.500 0zM11 8.300c0-1.700 1.200-2.500 1.800-2.900C11.900 4.100 10.500 3.800 9.500 3.800c-1 0-1.700.6-2.400.6-.8 0-1.500-.6-2.600-.6C2.500 3.900.8 5.500.8 8.600c0 3.300 2.200 7.100 4 7.100.8 0 1.300-.6 2.400-.6s1.400.6 2.400.6c1.500 0 2.800-2.300 3.400-4C12 11.200 11 10.200 11 8.300z" fill="#fff"/></svg>
  <button class="m app">QGIS</button><button class="m">Project</button><button class="m">Edit</button><button class="m">View</button><button class="m">Layer</button><button class="m">Settings</button><button class="m">Plugins</button><button class="m">Vector</button><button class="m">Raster</button><button class="m">Database</button><button class="m">Web</button><button class="m">Mesh</button><button class="m">Processing</button><button class="m">Window</button><button class="m">Help</button>
  <div class="tray">
    <svg width="18" height="18" viewBox="0 0 18 18"><path d="M7 10H2.500V2H10v5" fill="none" stroke="#3b9be8" stroke-width="2.800"/><path d="M11 7h4.500v9H8v-5" fill="none" stroke="#e8463f" stroke-width="2.800"/><path d="M6 6l6 6" stroke="#9cf" stroke-width="1.500"/></svg>
    <svg width="20" height="18" viewBox="0 0 20 18"><path d="M5 1l5 3-5 3-5-3zM15 1l5 3-5 3-5-3zM5 7l5 3-5 3-5-3zM15 7l5 3-5 3-5-3zM10 11.500l4 2.500-4 3-4-3z" fill="#e8e8e8"/></svg>
    <svg width="20" height="14" viewBox="0 0 20 14"><path d="M4 12C0 11 0 6 4 6c2-6 10-6 12 0 5 1 5 7 0 7H5z" fill="#a9a9a9"/><path d="M2 8q6-5 15 4.500l-1 .500H4Q-1 12 2 8z" fill="#f2f2f2"/></svg>
    <svg width="16" height="18" viewBox="0 0 16 18"><path d="M0 1h16v16H0z" fill="#eee"/><path d="M8 3l5 9-2 3H5l-2-3z" fill="#222"/><path d="M8 8l2 4H6z" fill="#eee"/></svg>
    <span class="temp"><svg width="16" height="18" viewBox="0 0 16 18"><rect y="1" width="16" height="16" rx="3" fill="#eee"/><circle cx="8" cy="9" r="6.500" fill="none" stroke="#222"/><path d="M8 3v12M2 9h12M4 5l8 8M12 5l-8 8" stroke="#222" stroke-width="1.400"/></svg>66°C</span>
    <svg width="18" height="18" viewBox="0 0 18 18"><circle cx="9" cy="9" r="6.500" fill="none" stroke="#eee" stroke-width="1.500"/><path d="M7 6l5 3-5 3z" fill="#eee"/></svg>
    <svg width="12" height="18" viewBox="0 0 12 18"><path d="M4 13l5-7-3-3v12l3-3-2-2" fill="none" stroke="#666" stroke-width="1.200"/><path d="M1 3l10 12" stroke="#999" stroke-width="1.300"/></svg>
    <svg width="24" height="14" viewBox="0 0 24 14"><rect x="1" y="1.500" width="20" height="11" rx="3" fill="none" stroke="#bbb"/><rect x="3" y="3" width="16" height="8" rx="1.500" fill="#eee"/><path d="M12 1L7 7.500h4L9.500 13 15 6.500h-4z" fill="#eee" stroke="#282828"/><path d="M22.500 5v4" stroke="#bbb" stroke-width="1.500"/></svg>
    <span class="kbd"><b>A</b></span>
    <svg width="18" height="18" viewBox="0 0 18 18"><path d="M3 6.500A6.700 6.700 0 1 1 3 12M1 8l2.500 2L5.500 7M9 5v4.500l2.500 2.500" fill="none" stroke="#ddd" stroke-width="1.300"/></svg>
    <svg width="22" height="16" viewBox="0 0 22 16"><path d="M3.500 7Q11 0 18.500 7M6.500 10.200q4.500-4 9 0" fill="none" stroke="#fff" stroke-width="2.200"/><path d="M8.800 12.300q2.200-2 4.400 0L11 14.800z" fill="#fff"/></svg>
    <svg width="16" height="16" viewBox="0 0 16 16"><circle cx="6.500" cy="6.500" r="5" fill="none" stroke="#eee" stroke-width="1.500"/><path d="M10 10l5 5" stroke="#eee" stroke-width="1.600"/></svg>
    <svg width="14" height="16" viewBox="0 0 14 16"><rect x=".7" y="1.500" width="12.600" height="5" rx="2.500" fill="none" stroke="#eee" stroke-width="1.400"/><rect y="9" width="14" height="6" rx="3" fill="#eee"/><circle cx="3.500" cy="4" r="1.500" fill="#eee"/><circle cx="10.500" cy="12" r="2" fill="#282828"/></svg>
    <svg width="14" height="14" viewBox="0 0 14 14"><circle cx="7" cy="7" r="7" fill="url(#gSiri)"/></svg>
    <time><span>Thu 28 Nov</span><span>11:22</span></time>
  </div>
</nav>

<div class="window">
  <header class="titlebar">
    <div class="lights"><i class="red"></i><i class="amber"></i><i class="green"></i></div>
    <h1>*Untitled Project - QGIS</h1>
    <p>*Untitled Project - QGIS</p>
  </header>

  <div class="bar">
    <div class="grp"><i class="grip"></i>
      <button class="tb"><svg><use href="#new"/></svg></button><button class="tb"><svg><use href="#open"/></svg></button><button class="tb"><svg><use href="#save"/></svg></button><button class="tb"><svg><use href="#newlayout"/></svg></button><button class="tb"><svg><use href="#layouts"/></svg></button><button class="tb"><svg><use href="#style"/></svg></button></div>
    <div class="grp"><i class="grip"></i>
      <button class="tb on"><svg><use href="#hand"/></svg></button><button class="tb"><svg><use href="#pansel"/></svg></button><button class="tb"><svg><use href="#zin"/></svg></button><button class="tb"><svg><use href="#zout"/></svg></button><button class="tb"><svg><use href="#zfull"/></svg></button><button class="tb"><svg><use href="#zsel"/></svg></button><button class="tb"><svg><use href="#zlay"/></svg></button><button class="tb" disabled><svg><use href="#znat"/></svg></button><button class="tb"><svg><use href="#zlast"/></svg></button><button class="tb" disabled><svg><use href="#znext"/></svg></button><button class="tb"><svg><use href="#mapview"/></svg></button><button class="tb"><svg><use href="#bmnew"/></svg></button><button class="tb"><svg><use href="#bm"/></svg></button><button class="tb"><svg><use href="#refresh"/></svg></button></div>
    <div class="grp"><i class="grip"></i>
      <button class="tb"><svg><use href="#info"/></svg></button><button class="tb"><svg><use href="#action"/></svg></button><button class="dd"></button><button class="tb sel"><svg><use href="#select"/></svg></button><button class="dd sel"></button><button class="tb"><svg><use href="#selform"/></svg></button><button class="dd"></button><button class="tb"><svg><use href="#desel"/></svg></button><button class="tb"><svg><use href="#table"/></svg></button><button class="tb"><svg><use href="#abacus"/></svg></button><button class="tb"><svg><use href="#gear"/></svg></button><button class="tb"><svg><use href="#sigma"/></svg></button><button class="tb"><svg><use href="#measure"/></svg></button><button class="dd"></button><button class="tb"><svg><use href="#tip"/></svg></button><button class="tb"><svg><use href="#textann"/></svg></button><button class="dd"></button></div>
  </div>

  <div class="bar">
    <div class="grp"><i class="grip"></i>
      <button class="tb"><svg><use href="#dsm"/></svg></button><button class="tb"><svg><use href="#gpkg"/></svg></button><button class="tb"><svg><use href="#vnew"/></svg></button><button class="tb"><svg><use href="#feather"/></svg></button><button class="tb"><svg><use href="#chip"/></svg></button><i class="sep"></i><button class="tb"><svg><use href="#vbox"/></svg></button></div>
    <div class="grp"><i class="grip"></i>
      <button class="tb corner"><svg><use href="#pencils"/></svg></button><button class="tb on"><svg><use href="#pencil"/></svg></button><button class="tb" disabled><svg><use href="#saveedit"/></svg></button><button class="tb"><svg><use href="#addpoly"/></svg></button><button class="tb"><svg><use href="#vertex"/></svg></button><button class="dd"></button><button class="tb" disabled><svg><use href="#modattr"/></svg></button><button class="tb" disabled><svg><use href="#trash"/></svg></button><button class="tb" disabled><svg><use href="#cut"/></svg></button><button class="tb" disabled><svg><use href="#copy"/></svg></button><button class="tb"><svg><use href="#paste"/></svg></button><button class="tb" disabled><svg><use href="#undo"/></svg></button><button class="tb" disabled><svg><use href="#redo"/></svg></button></div>
    <div class="grp"><i class="grip"></i>
      <button class="tb"><svg><use href="#abc"/></svg></button><button class="tb"><svg><use href="#diagram"/></svg></button><i class="sep"></i><button class="tb"><svg><use href="#abpin"/></svg></button><button class="tb"><svg><use href="#abcred"/></svg></button><i class="sep"></i><button class="tb" disabled><svg><use href="#abpin2"/></svg></button><button class="tb" disabled><svg><use href="#abeye"/></svg></button><button class="tb" disabled><svg><use href="#abgo"/></svg></button><button class="tb" disabled><svg><use href="#abrot"/></svg></button><button class="tb" disabled><svg><use href="#abedit"/></svg></button></div>
    <div class="grp"><i class="grip"></i><button class="tb"><svg><use href="#db"/></svg></button></div>
    <div class="grp"><i class="grip"></i><button class="tb"><svg><use href="#globeadd"/></svg></button><button class="tb"><svg><use href="#globefind"/></svg></button><button class="tb"><svg><use href="#globebin"/></svg></button></div>
    <div class="grp"><i class="grip"></i><button class="tb"><svg><use href="#python"/></svg></button></div>
    <div class="grp"><i class="grip"></i><button class="tb"><svg><use href="#help"/></svg></button></div>
    <div class="grp"><i class="grip"></i><button class="tb"><svg><use href="#sheet"/></svg></button></div>
  </div>

  <div class="bar">
    <div class="grp"><i class="grip"></i>
      <button class="tb" disabled><svg><use href="#tri"/></svg></button><button class="tb"><svg><use href="#move"/></svg></button><button class="dd"></button><button class="tb"><svg><use href="#rot"/></svg></button><button class="tb"><svg><use href="#scale"/></svg></button><button class="tb"><svg><use href="#ring"/></svg></button><button class="tb"><svg><use href="#part"/></svg></button><button class="tb"><svg><use href="#fill"/></svg></button><button class="tb"><svg><use href="#delring"/></svg></button><button class="tb"><svg><use href="#delpart"/></svg></button><button class="tb"><svg><use href="#reshape"/></svg></button><button class="tb"><svg><use href="#offset"/></svg></button><button class="tb" disabled><svg><use href="#trimv"/></svg></button><button class="tb"><svg><use href="#merge"/></svg></button><button class="tb"><svg><use href="#split1"/></svg></button><button class="tb"><svg><use href="#split2"/></svg></button><button class="tb" disabled><svg><use href="#stitch"/></svg></button><button class="tb" disabled><svg><use href="#lines"/></svg></button><button class="tb" disabled><svg><use href="#rotsym"/></svg></button><button class="dd"></button></div>
    <div class="grp"><i class="grip"></i>
      <button class="tb" disabled><svg><use href="#hist"/></svg></button><button class="tb" disabled><svg><use href="#histlr"/></svg></button><button class="tb" disabled><svg><use href="#hist"/></svg></button><button class="tb" disabled><svg><use href="#histlr"/></svg></button><button class="tb" disabled><svg><use href="#sunup"/></svg></button><button class="tb" disabled><svg><use href="#sundn"/></svg></button><button class="tb" disabled><svg><use href="#conup"/></svg></button><button class="tb" disabled><svg><use href="#condn"/></svg></button><button class="tb"><svg><use href="#hash"/></svg></button></div>
    <div class="grp snap"><i class="grip"></i>
      <button class="tb"><svg><use href="#magnet"/></svg></button><button class="tb corner" disabled><svg><use href="#snapall"/></svg></button><button class="tb corner" disabled><svg><use href="#dots"/></svg></button>
      <span class="spin tol"><input type="text" value="12" disabled aria-label="Snapping tolerance"><span class="steps"><button></button><button></button></span></span>
      <select class="unit" disabled aria-label="Snapping unit"><option>px</option></select>
      <button class="tb"><svg><use href="#topo"/></svg></button><button class="tb" disabled><svg><use href="#inter"/></svg></button><button class="tb" disabled><svg><use href="#trace"/></svg></button><button class="dd"></button></div>
  </div>

  <div class="bar">
    <div class="grp"><i class="grip"></i>
      <button class="tb"><svg><use href="#arc"/></svg></button><button class="dd"></button><button class="tb"><svg><use href="#circ"/></svg></button><button class="dd"></button><button class="tb"><svg><use href="#elli"/></svg></button><button class="dd"></button><button class="tb"><svg><use href="#rect"/></svg></button><button class="dd"></button><button class="tb"><svg><use href="#penta"/></svg></button><button class="dd"></button></div>
    <div class="grp"><i class="grip"></i><button class="tb"><svg><use href="#cad"/></svg></button><button class="dd"></button></div>
  </div>

  <div class="tooltip" role="tooltip">Shape Digitizing Toolbar</div>
  <svg class="cursor" viewBox="0 0 12 18"><path d="M1 1v14l3.500-3 2.300 5 2.400-1-2.200-5H11z" fill="#000" stroke="#fff"/></svg>

  <main>
    <aside class="side">
      <i class="grip flat"></i>
      <div><button class="tb"><svg><use href="#vadd"/></svg></button></div>
      <div><button class="tb"><svg><use href="#raster"/></svg></button></div>
      <div><button class="tb"><svg><use href="#meshi"/></svg></button></div>
      <div><button class="tb"><svg><use href="#comma"/></svg></button></div>
      <div><button class="tb"><svg><use href="#fadd"/></svg></button></div>
      <div><button class="tb"><svg><use href="#vboxadd"/></svg></button></div>
      <div><button class="tb"><svg><use href="#elephant"/></svg></button><button class="dd"></button></div>
      <div><button class="tb"><svg><use href="#wms"/></svg></button><button class="dd"></button></div>
      <div><button class="tb"><svg><use href="#wcs"/></svg></button></div>
      <div><button class="tb"><svg><use href="#wfs"/></svg></button><button class="dd"></button></div>
      <div><button class="tb"><svg><use href="#vnew"/></svg></button><button class="dd"></button></div>
    </aside>

    <section class="panel">
      <div class="phead"><h2>Layers</h2>
        <button><svg viewBox="0 0 12 12"><rect x=".5" y=".5" width="11" height="11" rx="2" fill="none" stroke="#555"/><path d="M5 2.500h4.500V7H5zM3 5h4v4.500H3z" fill="#eee" stroke="#555"/></svg></button>
        <button><svg viewBox="0 0 12 12"><rect x=".5" y=".5" width="11" height="11" rx="2" fill="none" stroke="#555"/><path d="M3 3l6 6M9 3L3 9" stroke="#444" stroke-width="2"/></svg></button>
      </div>
      <div class="ptools">
        <button class="sb"><svg><use href="#brush"/></svg></button><button class="sb"><svg><use href="#gadd"/></svg></button><button class="sb corner"><svg><use href="#eye"/></svg></button><button class="sb"><svg><use href="#funnel"/></svg></button><button class="sb"><svg><use href="#expr"/></svg></button><button class="dd"></button><button class="sb"><svg><use href="#expand"/></svg></button><button class="sb"><svg><use href="#collapse"/></svg></button><button class="sb"><svg><use href="#remove"/></svg></button>
      </div>
      <ul class="tree">
        <li class="cur"><i class="tw"></i><label><input type="checkbox" checked><svg class="sw" viewBox="0 0 16 16"><path d="M.5.500h15v15H.5z" fill="#b7d17c" stroke="#8d9a6a"/><path d="M5 10l5-8 3 2-5 8-4 2z" fill="#e5dc7e" stroke="#a09a58"/></svg><b><u>area_trabajo_23030</u></b></label></li>
        <li><i class="tw"></i><label><input type="checkbox" checked><svg class="sw" viewBox="0 0 16 16"><path d="M.5.500h15v15H.5z" fill="#4adbdb" stroke="#479d9d"/></svg><b>incendio_lanjaron_perimetro_23030</b></label></li>
        <li><i class="tw open"></i><label><input type="checkbox" checked><svg class="sw"><use href="#group"/></svg><span>group1</span></label></li>
      </ul>
      <div class="tabs"><button class="active">Layers</button><button>Browser</button></div>
    </section>

    <section class="map" aria-label="Map canvas">
      <svg viewBox="0 0 1535 811"><g transform="translate(495 222) scale(.3333)"><path d="M365 80L378 85 382 95 378 100 388 105 398 102 405 92 420 90 422 86 430 90 428 96 434 100 445 110 465 116 470 122 480 125 490 130 497 125 492 143 480 145 470 146 460 155 452 168 435 182 420 195 416 202 421 206 414 212 412 222 400 240 385 256 378 270 365 276 350 276 346 280 348 292 338 296 328 291 325 298 334 303 336 308 330 314 340 316 345 304 365 302 380 290 400 284 404 278 412 284 418 278 424 286 428 280 422 273 428 267 418 264 426 258 435 258 442 250 445 242 462 230 485 226 492 236 494 230 510 232 515 229 540 231 545 238 533 243 537 250 560 258 574 270 565 285 545 302 536 296 533 276 526 284 526 292 520 302 516 300 508 288 495 296 486 305 488 318 478 330 470 332 463 342 472 352 480 354 484 338 488 350 495 350 497 364 510 358 528 362 545 380 568 385 566 389 540 388 538 396 545 408 555 412 588 410 592 400 594 410 620 408 625 403 640 400 652 398 655 392 663 396 665 410 663 425 655 432 667 430 672 418 677 408 683 422 678 430 680 448 676 456 664 460 678 462 680 480 690 482 698 476 706 488 703 505 693 508 690 518 698 522 700 532 712 548 740 550 747 560 765 565 767 603 762 600 764 590 760 583 754 592 746 612 748 620 730 624 734 632 732 645 727 660 726 682 740 692 750 700 758 698 762 685 775 684 779 678 784 682 795 680 797 660 786 657 788 640 783 628 778 608 787 614 785 626 795 622 800 606 803 578 806 574 809 582 807 628 815 632 828 625 832 630 840 622 843 628 848 620 855 622 860 612 858 600 862 570 875 556 920 550 945 535 955 527 965 524 962 508 975 509 984 502 990 490 1005 492 1012 504 1010 514 1028 510 1040 522 1052 532 1054 540 1046 555 1056 558 1060 580 1057 591 1045 592 1032 600 1036 605 1028 612 1026 625 1015 650 1000 664 990 675 992 688 982 702 980 715 976 735 966 744 968 752 950 770 945 782 935 798 915 820 900 832 894 848 898 857 892 856 885 865 868 868 866 885 850 910 835 928 820 938 795 942 780 960 765 972 755 966 748 972 740 965 715 962 690 962 670 967 635 978 625 985 620 1000 605 1010 595 1000 585 1015 587 1040 583 1048 570 1048 565 1033 560 1030 556 1046 552 1050 545 1042 530 1040 515 1030 500 1022 485 1030 490 1018 475 1008 465 1014 455 1006 445 998 430 992 420 978 405 965 390 961 370 953 345 949 335 955 330 945 320 943 302 950 300 965 275 969 262 966 250 974 245 982 243 970 252 966 256 954 275 953 290 940 298 935 292 908 280 904 272 910 270 922 262 930 265 912 258 900 250 902 250 896 262 894 252 886 242 882 244 870 240 862 242 845 235 848 225 853 205 838 205 824 196 821 215 817 220 808 216 798 206 803 200 795 198 780 194 768 184 782 190 790 186 797 179 793 182 782 165 782 175 762 183 757 182 751 170 756 148 754 144 760 128 748 132 738 122 730 130 724 150 722 158 710 168 695 175 680 150 670 120 656 114 640 110 632 115 600 125 590 138 586 185 590 190 608 196 605 198 595 208 592 206 578 212 562 220 558 205 557 200 545 188 543 192 515 202 502 208 488 228 490 240 500 250 504 250 518 260 520 260 502 267 494 277 491 260 490 254 478 252 455 246 440 236 430 225 430 212 418 210 410 192 413 206 406 208 390 230 392 232 380 245 377 236 367 245 364 232 362 242 342 228 336 228 328 240 325 236 312 240 300 234 292 250 282 240 270 243 262 238 255 246 242 232 232 250 240 258 226 262 236 272 230 275 220 268 195 258 180 256 165 270 162 274 152 300 137 310 136 314 144 320 136 328 134 330 118 338 108 340 98 355 92 360 86Z"/></g></svg>
    </section>
  </main>

  <footer class="status">
    <div class="locate"><svg viewBox="0 0 16 16"><circle cx="6.500" cy="6.500" r="4.500" fill="none" stroke="#777" stroke-width="1.200"/><path d="M10 10l4 4" stroke="#777" stroke-width="1.300"/></svg><input type="text" placeholder="Type to locate (⌘K)" aria-label="Locator"></div>
    <label for="coord">Coordinate</label><input id="coord" class="coord" type="text" value="439689,4098076">
    <button class="ib mouse"><svg viewBox="0 0 16 16"><path d="M3 5q4-4 7 1l3 5q0 4-4 4-2 0-3-3z" fill="#ccc" stroke="#333"/><path d="M2 2l6 12M5 1l5 9M9 8l5-6" stroke="#222" stroke-width="1.300"/></svg></button>
    <label for="scale-in">Scale</label><span class="spin scale"><input id="scale-in" type="text" value="1:73525"><button class="drop"></button></span>
    <button class="ib lock"><svg viewBox="0 0 16 16"><path d="M5 7V4.500a3 3 0 0 1 6 0V7" fill="none" stroke="#777" stroke-width="1.500"/><rect x="2" y="7" width="12" height="8.500" rx="1.500" fill="#5b5b5b"/></svg></button>
    <label for="mag">Magnifier</label><span class="spin mag"><input id="mag" type="text" value="100%"><span class="steps"><button></button><button></button></span></span>
    <label for="rotn" class="rotl">Rotation</label><span class="spin rotn"><input id="rotn" type="text" value="0,0 °"><span class="steps"><button></button><button></button></span></span>
    <label class="render"><input type="checkbox" checked>Render</label>
    <button class="crs"><svg viewBox="0 0 16 16"><circle cx="8" cy="7.500" r="7" fill="#777"/><path d="M1 7.500h14M8 .5v14M3 3.500h10M3 11.500h10M8 .5C3 4 3 11 8 14.500M8 .5c5 3.500 5 10.500 0 14" fill="none" stroke="#e4e4e4" stroke-width=".8"/></svg>EPSG:23030</button>
    <button class="ib"><svg viewBox="0 0 16 16"><path d="M8 1c10 0 10 11 3 11.500L11 15l-4-2.500C-2 12-1 1 8 1z" fill="#555"/><path d="M4 6.500h1.500M7.300 6.500h1.500M10.500 6.500H12" stroke="#fff" stroke-width="1.500"/></svg></button>
  </footer>
</div>
</body>
</html>
```
FILE: styles.css
```css
* { box-sizing: border-box; }
html, body { margin: 0; height: 100%; }
body {
  display: flex;
  flex-direction: column;
  background: #0c0c0c;
  color: #262626;
  font: 12px/16px Inter, "Noto Sans", sans-serif;
}
button {
  margin: 0;
  padding: 0;
  border: 0;
  background: none;
  color: inherit;
  font: inherit;
}
input, select { font: inherit; color: inherit; }
svg { display: block; flex: none; }
.paints { position: absolute; width: 0; height: 0; }
.sprite { display: none; }

/* text inside icons */
.tagtext { font: bold 8px "Noto Sans", sans-serif; fill: #333; stroke: none; }
.redtag { color: #d8232c; }
.smalla { font: 13px "Noto Sans", sans-serif; fill: #333; }
.one { font: bold 9px "Noto Sans", sans-serif; fill: #555; }
.ital { font: italic bold 15px "Liberation Serif", serif; fill: #fff; }
.bigt { font: 15px "Liberation Serif", serif; fill: #333; stroke: #333; stroke-width: .5; }
.q { font: 15px "Liberation Serif", serif; fill: #fff; }
.eps { font: bold 14px "Liberation Serif", serif; fill: #7a3f86; }

/* system menu bar */
.menubar {
  display: flex;
  align-items: center;
  height: 24px;
  flex: none;
  padding: 0 18px 0 19px;
  background: #282828;
  color: #f1f1f1;
  font-size: 13px;
  font-weight: 500;
  white-space: nowrap;
}
.apple { width: 14px; height: 16px; margin-right: 20px; }
.m { margin-right: 20px; }
.app { font-weight: 700; }
.tray { display: flex; align-items: center; gap: 18px; margin-left: auto; }
.tray time { display: flex; gap: 10px; }
.temp { display: flex; align-items: center; gap: 1px; font-weight: 400; }
.kbd {
  width: 22px;
  height: 16px;
  margin: 0 2px;
  border: 1px solid #ddd;
  border-radius: 3px;
  font-size: 11px;
  line-height: 14px;
  text-align: center;
}

/* window */
.window {
  position: relative;
  display: flex;
  flex: 1;
  flex-direction: column;
  min-height: 0;
  margin-top: 1px;
  overflow: hidden;
  border-radius: 10px;
  background: #ebebeb;
}
.titlebar {
  position: relative;
  flex: none;
  height: 56px;
  padding-top: 6px;
  border-bottom: 1px solid #cfcfcf;
  background: #eee;
  text-align: center;
}
.titlebar h1 { margin: 0; font-size: 13px; line-height: 16px; color: #3b3b3b; }
.titlebar p { margin: 12px 0 0; font-size: 11px; line-height: 16px; color: #444; }
.lights { position: absolute; top: 8px; left: 8px; display: flex; gap: 8px; }
.lights i { width: 12px; height: 12px; border-radius: 50%; }
.red { background: #ff5f57; }
.amber { background: #febc2e; }
.green { background: #28c840; }

/* toolbars */
.bar {
  display: flex;
  flex: none;
  gap: 8px;
  height: 39px;
  padding: 3px 0 0 4px;
  border-bottom: 1px solid #b1b1b1;
  background: linear-gradient(#f5f5f5, #eaeaea);
}
.grp { display: flex; gap: 1px; height: 32px; align-items: center; }
.grip {
  width: 5px;
  height: 18px;
  margin-right: 3px;
  background: radial-gradient(circle at 1px 1px, #c2c2c2 1px, transparent 1px) 0 0 / 3px 3px;
}
.tb {
  position: relative;
  display: flex;
  align-items: center;
  justify-content: center;
  width: 32px;
  height: 32px;
  border: 1px solid transparent;
  border-radius: 2px;
}
.tb svg { width: 24px; height: 24px; }
.tb:disabled svg { opacity: .32; }
.tb.on { border-color: #a9a9a9; background: #d8d8d8; }
.sel { border: 1px solid #a2a2a2; border-radius: 3px; background: #fff; }
.dd { position: relative; width: 11px; height: 32px; }
.dd::after, .corner::after {
  content: "";
  display: block;
  margin: 2px 0 0;
  width: 0;
  border: 5px solid transparent;
  border-top-color: #4a4a4a;
  border-bottom: 0;
}
.dd.sel::after { border-width: 4px; border-bottom: 0; }
.corner { position: relative; }
.corner::after {
  position: absolute;
  right: 0;
  bottom: 1px;
  border-width: 3px;
  border-bottom: 0;
}
.sep { width: 1px; height: 28px; margin: 0 3px 0 2px; background: #d0d0d0; }
.snap { margin-left: auto; margin-right: 177px; }

/* fields */
.spin {
  display: flex;
  height: 22px;
  border: 1px solid #a6a6a6;
  border-radius: 3px;
  background: #fff;
}
.spin input {
  flex: 1;
  min-width: 0;
  padding: 0 4px;
  border: 0;
  background: none;
}
.steps {
  display: flex;
  flex-direction: column;
  width: 15px;
  border-left: 1px solid #a6a6a6;
}
.steps button { flex: 1; }
.steps button::after {
  content: "";
  display: block;
  width: 0;
  margin: 0 auto;
  border: 4px solid transparent;
  border-top: 0;
  border-bottom-color: #4a4a4a;
}
.steps button + button::after { border-top: 4px solid #4a4a4a; border-bottom: 0; }
.tol { width: 98px; font-size: 13px; color: #b3b3b3; }
.unit {
  appearance: none;
  width: 99px;
  height: 24px;
  padding: 0 5px;
  border: 1px solid #bdbdbd;
  border-radius: 3px;
  background: conic-gradient(from -30deg at 50% 100%, #aaa 60deg, transparent 0) no-repeat right 6px center / 9px 7px, #f0f0f0;
  color: #8d8d8d;
  font-size: 13px;
  opacity: 1;
}

/* tooltip and pointer float over the panels */
.tooltip {
  position: absolute;
  z-index: 2;
  top: 225px;
  left: 166px;
  padding: 1px 4px;
  border: 1px solid #111;
  background: #fff;
  box-shadow: 0 4px 12px rgba(0, 0, 0, .3);
  font-size: 11px;
}
.cursor { position: absolute; z-index: 3; top: 207px; left: 162px; width: 12px; height: 18px; }

main { display: flex; flex: 1; min-height: 0; }
.side {
  width: 52px;
  flex: none;
  padding: 4px 0 0 4px;
  border-right: 1px solid #b1b1b1;
  background: linear-gradient(90deg, #f6f6f6, #e8e8e8);
}
.side > div { display: flex; }
.flat { display: block; width: 17px; height: 5px; margin: 0 0 2px 15px; }

.panel { display: flex; flex-direction: column; width: 326px; flex: none; }
.phead { display: flex; align-items: center; gap: 2px; height: 20px; padding: 0 1px 0 4px; }
.phead h2 { flex: 1; margin: 0; font-size: 11px; font-weight: 400; }
.phead svg { width: 12px; height: 12px; }
.ptools { display: flex; align-items: center; height: 30px; padding: 0 0 2px 3px; }
.sb { display: flex; justify-content: center; width: 25px; }
.sb svg { width: 16px; height: 16px; }
.ptools .dd { height: 16px; width: 12px; }
.ptools .dd::after { margin-top: 6px; }
.tree {
  flex: 1;
  margin: 0;
  padding: 0;
  border: 1px solid #b5b5b5;
  border-left-color: #d5d5d5;
  background: #fff;
  list-style: none;
  font-size: 13px;
}
.tree li {
  display: flex;
  align-items: center;
  height: 18px;
  padding-left: 8px;
  border-right: 3px solid #e6e6e6;
}
.tree .cur { background: #dcdcdc; color: #000; }
.tree label { display: flex; align-items: center; }
.tw { width: 14px; }
.tw.open::before {
  content: "";
  display: block;
  width: 0;
  border: 4px solid transparent;
  border-left-color: #4a4a4a;
  border-right: 0;
}
input[type="checkbox"] {
  appearance: none;
  position: relative;
  width: 14px;
  height: 14px;
  margin: 0;
  border: 1px solid #aaa;
  background: #fff;
}
input[type="checkbox"]:checked::after {
  content: "";
  position: absolute;
  top: 0;
  left: 4px;
  width: 4px;
  height: 9px;
  border: solid #111;
  border-width: 0 2px 2px 0;
  transform: rotate(38deg);
}
.sw { width: 16px; height: 16px; margin: 0 7px 0 6px; }

.tabs { display: flex; align-items: flex-start; height: 28px; margin-top: 1px; border-top: 1px solid #a9a9a9; font-size: 13px; }
.tabs button {
  width: 73px;
  height: 24px;
  border: 1px solid #b5b5b5;
  border-top: 0;
  border-radius: 0 0 4px 4px;
  background: #dadada;
}
.tabs .active { width: 65px; height: 26px; border-left: 0; background: #f4f4f4; }

.map {
  flex: 1;
  min-width: 0;
  margin-left: 6px;
  border: 1px solid #b1b1b1;
  border-right: 0;
  background: #fff;
}
.map svg { width: 100%; height: 100%; }
.map path { fill: #4adddc; stroke: #3c5f60; stroke-width: 2.500; stroke-linejoin: round; }

/* status bar */
.status {
  display: flex;
  align-items: center;
  height: 30px;
  flex: none;
  padding: 0 9px 0 4px;
  font-size: 11px;
  white-space: nowrap;
}
.status input[type="text"] { font-size: 12px; }
.locate {
  display: flex;
  align-items: center;
  gap: 6px;
  width: 216px;
  height: 24px;
  margin-right: auto;
  padding-left: 8px;
  border: 1px solid #a6a6a6;
  border-radius: 3px;
  background: #fff;
}
.locate svg { width: 14px; height: 14px; }
.status .locate input { flex: 1; min-width: 0; padding: 0; border: 0; font-size: 13px; }
.locate input::placeholder { color: #7d7d7d; opacity: 1; }
.coord { width: 113px; height: 22px; margin-left: 4px; padding: 0 4px; border: 1px solid #a6a6a6; border-radius: 3px; text-align: center; }
.status .spin { margin-left: 4px; }
.ib svg { width: 16px; height: 16px; }
.mouse { margin: 0 13px 0 4px; }
.scale { width: 93px; }
.drop { width: 20px; border-left: 1px solid #c5c5c5; background: #f1f1f1; }
.drop::after { content: ""; display: block; width: 0; margin: 0 auto; border: 4px solid transparent; border-top: 6px solid #555; border-bottom: 0; }
.lock { margin: 0 6px 0 10px; }
.mag { width: 97px; }
.rotl { margin-left: 9px; }
.status .rotn { width: 92px; margin-left: 10px; }
.render { display: flex; align-items: center; gap: 5px; margin-left: 7px; }
.crs { display: flex; align-items: center; gap: 2px; margin: 0 23px 0 17px; color: #444; }
.crs svg { width: 15px; height: 15px; }
```
